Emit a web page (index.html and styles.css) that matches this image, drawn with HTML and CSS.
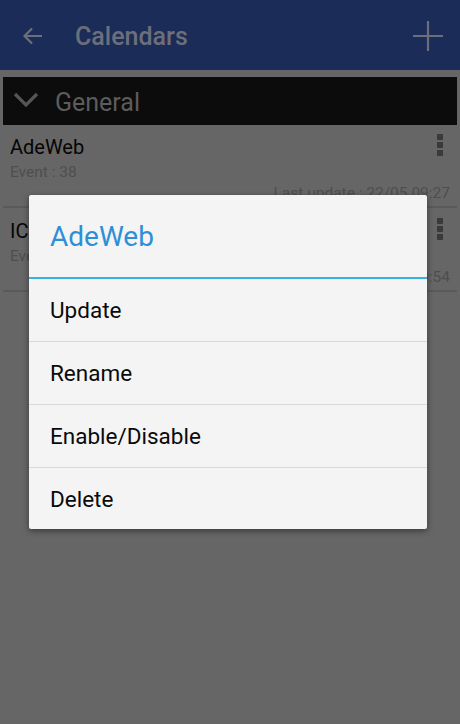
FILE: index.html
```html
<!DOCTYPE html>
<html>
<head>
<meta charset="utf-8">
<link rel="stylesheet" href="styles.css">
</head>
<body>
<div class="screen">
  <header class="appbar">
    <svg class="back" width="24" height="24" viewBox="0 0 24 24"><path d="M21 12H3.5M11 4.5L3.5 12l7.5 7.5" fill="none" stroke="#6b6f7a" stroke-width="2.2"/></svg>
    <span class="title">Calendars</span>
    <svg class="plus" width="32" height="32" viewBox="0 0 32 32"><path d="M16 1v30M1 16h30" stroke="#6b6f7a" stroke-width="2.2"/></svg>
  </header>
  <main class="content">
    <div class="group">
      <svg class="chev" width="26" height="16" viewBox="0 0 26 16"><path d="M2 2l11 11L24 2" fill="none" stroke="#555" stroke-width="3.2"/></svg>
      <span class="group-name">General</span>
    </div>
    <div class="card">
      <div class="card-top">
        <div>
          <div class="cal-name">AdeWeb</div>
          <div class="cal-events">Event : 38</div>
        </div>
        <div class="kebab"><i></i><i></i><i></i></div>
      </div>
      <div class="cal-update">Last update : 22/05 09:27</div>
    </div>
    <div class="card">
      <div class="card-top">
        <div>
          <div class="cal-name">ICS</div>
          <div class="cal-events">Event : 12</div>
        </div>
        <div class="kebab"><i></i><i></i><i></i></div>
      </div>
      <div class="cal-update">Last update : 22/05 09:54</div>
    </div>
  </main>
  <div class="dialog">
    <div class="dialog-title">AdeWeb</div>
    <ul class="menu">
      <li>Update</li>
      <li>Rename</li>
      <li>Enable/Disable</li>
      <li>Delete</li>
    </ul>
  </div>
</div>
</body>
</html>
```
FILE: styles.css
```css
* { box-sizing: border-box; }
html, body { margin: 0; padding: 0; }
body {
  width: 460px;
  height: 724px;
  background: #666666;
  font-family: Roboto, "Noto Sans", sans-serif;
  overflow: hidden;
}
.screen {
  position: relative;
  width: 460px;
  height: 724px;
  background: #666666;
}
.appbar {
  height: 70px;
  background: #1c2c58;
  display: flex;
  align-items: center;
  padding: 0 16px 0 21px;
}
.back { margin-top: 2px; }
.title {
  margin-left: 30px;
  font-size: 25px;
  font-weight: 500;
  color: #6b6f7a;
  flex: 1;
  margin-top: 2px;
}
.plus { margin-top: 2px; }
.content {
  padding: 7px 3px 0 3px;
}
.group {
  height: 48px;
  background: #0c0c0c;
  display: flex;
  align-items: center;
  padding-left: 10px;
}
.chev { margin-top: -2px; }
.group-name {
  margin-left: 16px;
  font-size: 25px;
  color: #5c5c5c;
  margin-top: 2px;
}
.card {
  height: 83px;
  padding: 9px 8px 0 7px;
  border-bottom: 2px solid #5a5a5a;
  margin-bottom: 1px;
}
.card-top {
  display: flex;
  justify-content: space-between;
}
.cal-name {
  font-size: 20px;
  color: #050505;
  line-height: 26px;
}
.cal-events {
  font-size: 15.5px;
  color: #4e4e4e;
  line-height: 22px;
  margin-top: 1px;
}
.kebab {
  display: flex;
  flex-direction: column;
  gap: 2px;
  padding-top: 0;
  margin-right: 6px;
}
.kebab i {
  width: 6px;
  height: 6px;
  background: #3a3a3a;
}
.cal-update {
  text-align: right;
  font-size: 15.5px;
  color: #4e4e4e;
  line-height: 20px;
  margin-top: 0;
  margin-right: -1px;
}
.dialog {
  position: absolute;
  left: 29px;
  top: 195px;
  width: 398px;
  background: #f4f4f4;
  border-radius: 2px;
  box-shadow: 0 2px 6px rgba(0,0,0,0.45);
}
.dialog-title {
  height: 84px;
  padding: 25px 0 0 21px;
  font-size: 28px;
  color: #2d8fd9;
  border-bottom: 2px solid #35b1e2;
}
.menu {
  list-style: none;
  margin: 0;
  padding: 0;
}
.menu li {
  height: 63px;
  display: flex;
  align-items: center;
  padding-left: 21px;
  font-size: 22.5px;
  color: #0a0a0a;
  border-top: 1px solid #d8d8d8;
}
.menu li:first-child { border-top: none; height: 62px; }
.menu li:last-child { height: 62px; }
```
